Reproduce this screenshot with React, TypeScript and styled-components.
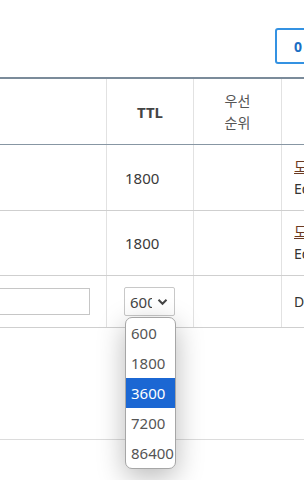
import { FC } from 'react';
import styled, { createGlobalStyle } from 'styled-components';

const GlobalStyle = createGlobalStyle`
  html, body {
    margin: 0;
    padding: 0;
    background: #fff;
  }
  body {
    font-family: "Noto Sans", "Noto Sans CJK KR", sans-serif;
    color: #333;
  }
`;

const Page = styled.div`
  position: relative;
  width: 304px;
  height: 480px;
  overflow: hidden;
`;

const Sheet = styled.div`
  width: 400px;
  margin-left: -40px;
`;

const Toolbar = styled.div`
  height: 77px;
  box-sizing: border-box;
  padding-top: 28px;
  display: flex;
  justify-content: flex-end;
  align-items: flex-start;
`;

const ActionButton = styled.button`
  width: 80px;
  height: 36px;
  margin-right: 5px;
  box-sizing: border-box;
  border: 2px solid #3492e2;
  border-radius: 3px;
  background: #fff;
  color: #1b6fc4;
  font-family: inherit;
  font-size: 14px;
  font-weight: 700;
  text-align: left;
  padding: 0 0 0 17px;
`;

const Row = styled.div<{ $h: number; $line: string; $top?: boolean }>`
  display: grid;
  grid-template-columns: 147px 87px 88px 78px;
  height: ${p => p.$h}px;
  border-top: ${p => (p.$top ? '2px solid #7b8b9a' : 'none')};
  border-bottom: 1px solid ${p => p.$line};
`;

const Cell = styled.div<{ $align?: 'start' | 'center' | 'end'; $pl?: number; $pr?: number }>`
  position: relative;
  display: flex;
  flex-direction: column;
  justify-content: center;
  align-items: ${p => (p.$align === 'center' ? 'center' : p.$align === 'end' ? 'flex-end' : 'flex-start')};
  padding-left: ${p => p.$pl ?? 0}px;
  padding-right: ${p => p.$pr ?? 0}px;
  border-right: 1px solid #e2e2e2;
  font-size: 15px;
  color: #3a3a3a;
  white-space: nowrap;
  overflow: visible;
  &:last-child {
    border-right: none;
  }
`;

const HeadText = styled.div<{ $bold?: boolean }>`
  font-size: ${p => (p.$bold ? 15 : 14)}px;
  font-weight: ${p => (p.$bold ? 700 : 400)};
  color: ${p => (p.$bold ? '#444' : '#555')};
  line-height: 22px;
  text-align: center;
`;

const LinkText = styled.span`
  color: #6b3a22;
  text-decoration: underline;
  line-height: 22px;
  font-size: 14px;
`;

const SubText = styled.span`
  line-height: 22px;
  font-size: 14px;
  color: #333;
`;

const TextInput = styled.input`
  width: 140px;
  height: 27px;
  box-sizing: border-box;
  border: 1px solid #c6c6c6;
  border-radius: 0;
  padding: 0 6px;
  font-family: inherit;
  font-size: 14px;
`;

const SelectBox = styled.div`
  position: relative;
  width: 51px;
  height: 29px;
  box-sizing: border-box;
  border: 1px solid #c8c8c8;
  border-radius: 2px;
  display: flex;
  align-items: center;
  padding-left: 5px;
  background: #fff;
`;

const SelectValue = styled.span`
  width: 22px;
  overflow: hidden;
  font-size: 15px;
  color: #444;
  line-height: 20px;
`;

const Chevron = styled.svg`
  margin-left: 5px;
  width: 11px;
  height: 8px;
`;

const Dropdown = styled.ul`
  position: absolute;
  top: 29px;
  left: 0px;
  width: 51px;
  margin: 0;
  padding: 0;
  list-style: none;
  box-sizing: border-box;
  border: 1px solid #a6a6a6;
  border-radius: 7px;
  background: #fff;
  overflow: hidden;
  box-shadow: 0 8px 28px rgba(0, 0, 0, 0.28);
  z-index: 5;
`;

const Option = styled.li<{ $active?: boolean }>`
  height: 30px;
  line-height: 30px;
  padding-left: 5px;
  font-size: 15px;
  color: ${p => (p.$active ? '#fff' : '#555')};
  background: ${p => (p.$active ? '#1b67d3' : 'transparent')};
`;

const Spacer = styled.div`
  height: 111px;
  border-bottom: 1px solid #dcdcdc;
`;

const ttlOptions = ['600', '1800', '3600', '7200', '86400'];

const App: FC = () => {
  return (
    <Page>
      <GlobalStyle />
      <Sheet>
        <Toolbar>
          <ActionButton>0</ActionButton>
        </Toolbar>

        <Row $h={65} $line="#8796a3" $top>
          <Cell />
          <Cell $align="center">
            <HeadText $bold>TTL</HeadText>
          </Cell>
          <Cell $align="center">
            <HeadText>우선<br />순위</HeadText>
          </Cell>
          <Cell $pl={12} />
        </Row>

        <Row $h={65} $line="#cfcfcf">
          <Cell />
          <Cell $pl={18}>1800</Cell>
          <Cell />
          <Cell $pl={12}>
            <LinkText>도메인</LinkText>
            <SubText>Edit</SubText>
          </Cell>
        </Row>

        <Row $h={64} $line="#cfcfcf">
          <Cell />
          <Cell $pl={18}>1800</Cell>
          <Cell />
          <Cell $pl={12}>
            <LinkText>도메인</LinkText>
            <SubText>Edit</SubText>
          </Cell>
        </Row>

        <Row $h={51} $line="#cfcfcf">
          <Cell $align="end" $pr={16}>
            <TextInput />
          </Cell>
          <Cell $pl={17}>
            <SelectBox>
              <SelectValue>600</SelectValue>
              <Chevron viewBox="0 0 11 8">
                <path d="M1.5 1.8 L5.5 5.8 L9.5 1.8" fill="none" stroke="#444" strokeWidth="2" />
              </Chevron>
              <Dropdown>
                {ttlOptions.map(v => (
                  <Option key={v} $active={v === '3600'}>{v}</Option>
                ))}
              </Dropdown>
            </SelectBox>
          </Cell>
          <Cell />
          <Cell $pl={12}>
            <SubText>Data</SubText>
          </Cell>
        </Row>

        <Spacer />
      </Sheet>
    </Page>
  );
};

export default App;
